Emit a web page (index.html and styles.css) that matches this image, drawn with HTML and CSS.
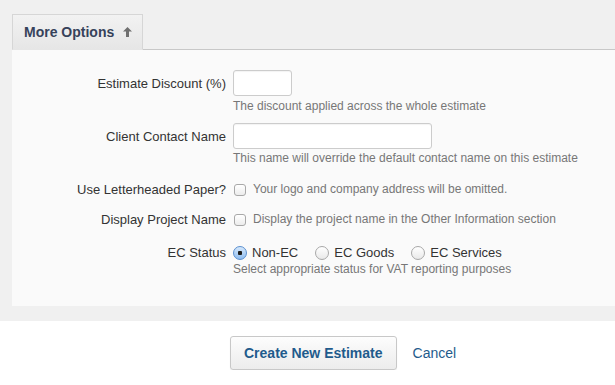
FILE: index.html
```html
<!doctype html>
<html lang="en">
    <head>
        <meta charset="UTF-8" />
        <title>New Estimate - More Options</title>
        <link rel="stylesheet" href="styles.css">
    </head>
    <body>
        <div class="options-area">
            <div class="tab-bar">
                <div class="tab">
                    More Options
                    <svg class="tab-arrow" width="9" height="10" viewBox="0 0 9 10"><path d="M4.5 0 L9 4.5 H6 V10 H3 V4.5 H0 Z" fill="#6f6f6f"/></svg>
                </div>
            </div>

            <div class="panel">
                <div class="form-row row-discount">
                    <label class="row-label" for="discount">Estimate Discount (%)</label>
                    <div class="row-field">
                        <input type="text" id="discount" class="input-small">
                        <div class="help">The discount applied across the whole estimate</div>
                    </div>
                </div>

                <div class="form-row row-contact">
                    <label class="row-label" for="contact">Client Contact Name</label>
                    <div class="row-field">
                        <input type="text" id="contact" class="input-medium">
                        <div class="help">This name will override the default contact name on this estimate</div>
                    </div>
                </div>

                <div class="form-row row-check">
                    <label class="row-label" for="letterhead">Use Letterheaded Paper?</label>
                    <div class="row-field inline">
                        <input type="checkbox" id="letterhead" class="check">
                        <span class="help">Your logo and company address will be omitted.</span>
                    </div>
                </div>

                <div class="form-row row-check">
                    <label class="row-label" for="project">Display Project Name</label>
                    <div class="row-field inline">
                        <input type="checkbox" id="project" class="check">
                        <span class="help">Display the project name in the Other Information section</span>
                    </div>
                </div>

                <div class="form-row row-status">
                    <label class="row-label">EC Status</label>
                    <div class="row-field">
                        <div class="radios">
                            <label class="radio-opt"><input type="radio" name="ec" class="radio" checked> Non-EC</label>
                            <label class="radio-opt"><input type="radio" name="ec" class="radio"> EC Goods</label>
                            <label class="radio-opt"><input type="radio" name="ec" class="radio"> EC Services</label>
                        </div>
                        <div class="help">Select appropriate status for VAT reporting purposes</div>
                    </div>
                </div>
            </div>
        </div>

        <div class="actions">
            <button class="btn-primary">Create New Estimate</button>
            <a href="#" class="cancel">Cancel</a>
        </div>
    </body>
</html>
```

FILE: styles.css
```css
* {
    margin: 0;
    padding: 0;
    box-sizing: border-box;
}

body {
    font-family: "Liberation Sans", Arial, sans-serif;
    font-size: 13px;
    color: #333;
    background: #fff;
}

.options-area {
    background: #f0f0f0;
    padding: 14px 0 15px 12px;
}

.tab-bar {
    display: flex;
    border-bottom: 1px solid #c8c8c8;
}

.tab {
    display: flex;
    align-items: center;
    width: 131px;
    height: 36px;
    margin-bottom: -1px;
    padding: 0 0 1px 11px;
    background: linear-gradient(#f2f2f2, #e6e6e6);
    border: 1px solid #d6d6d6;
    border-bottom: 1px solid #e6e6e6;
    font-size: 14px;
    font-weight: bold;
    color: #36425a;
}

.tab-arrow {
    margin-left: 9px;
}

.panel {
    background: #fafafa;
    padding: 20px 0 29px;
}

.form-row {
    display: flex;
    align-items: flex-start;
}

.row-label {
    width: 221px;
    padding-right: 7px;
    text-align: right;
    flex-shrink: 0;
    color: #333;
}

.row-discount .row-label,
.row-contact .row-label {
    padding-top: 6px;
}

.row-field {
    display: flex;
    flex-direction: column;
}

.row-field.inline {
    flex-direction: row;
    align-items: center;
}

.help {
    font-size: 12px;
    color: #777;
    line-height: 16px;
}

input[type="text"] {
    height: 26px;
    border: 1px solid #ccc;
    border-radius: 3px;
    background: #fff;
    font-family: inherit;
    font-size: 13px;
    box-shadow: inset 0 1px 1px rgba(0, 0, 0, 0.05);
}

.input-small {
    width: 59px;
}

.input-medium {
    width: 199px;
}

.row-discount .help {
    margin-top: 2px;
    margin-bottom: 9px;
}

.row-contact .help {
    margin-top: 1px;
}

.row-check {
    margin-top: 15px;
    line-height: 17px;
}

.row-check + .row-check {
    margin-top: 13px;
}

.check {
    appearance: none;
    width: 12px;
    height: 12px;
    margin: 2px 7px 0 1px;
    border: 1px solid #a8a8a8;
    border-radius: 3px;
    background: linear-gradient(#fff, #ececec);
}

.row-status {
    margin-top: 16px;
    line-height: 17px;
}

.radios {
    display: flex;
}

.radio-opt {
    display: flex;
    align-items: center;
    gap: 5px;
    font-size: 13px;
    color: #333;
    margin-right: 17px;
}

.radio {
    appearance: none;
    width: 14px;
    height: 14px;
    border: 1px solid #a8a8a8;
    border-radius: 50%;
    background: linear-gradient(#fff, #e9e9e9);
}

.radio:checked {
    border-color: #5a8fcf;
    background: radial-gradient(circle, #1c1c1c 0, #1c1c1c 2px, transparent 2.5px), linear-gradient(#d6e8fb, #8fbdf0);
}

.actions {
    display: flex;
    align-items: center;
    padding: 15px 0 0 230px;
}

.btn-primary {
    height: 34px;
    padding: 0 13px;
    border: 1px solid #c8c8c8;
    border-radius: 3px;
    background: linear-gradient(#fdfdfd, #ececec);
    box-shadow: 0 1px 1px rgba(0, 0, 0, 0.08);
    font-family: inherit;
    font-size: 14px;
    font-weight: bold;
    color: #1f5b8c;
    cursor: pointer;
}

.cancel {
    margin-left: 16px;
    font-size: 14px;
    color: #1f5b8c;
    text-decoration: none;
}
```
